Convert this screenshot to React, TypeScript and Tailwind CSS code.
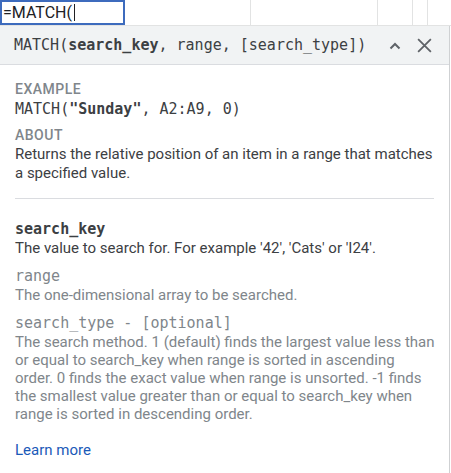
const MONO = "font-['DejaVu_Sans_Mono',monospace]";
const SANS = "font-['Roboto',sans-serif]";

function GridRow() {
  return (
    <div className="relative h-[26px] border-b border-[#e2e3e3]">
      <div className="absolute left-[250px] top-0 h-full w-px bg-[#e2e3e3]" />
      <div className="absolute left-[377px] top-0 h-full w-px bg-[#e2e3e3]" />
      <div className="absolute left-[412px] top-0 h-full w-px bg-[#e2e3e3]" />
      <div className="absolute left-[427px] top-0 h-full w-px bg-[#e2e3e3]" />
      <div
        className={`absolute left-0 top-0 flex h-[25px] w-[125px] items-center border-2 border-[#3d6bbd] bg-white pl-px text-[16px] text-[#202124] ${SANS}`}
      >
        <span>=MATCH(</span>
        <span className="ml-[2px] h-[17px] w-px bg-[#202124]" />
      </div>
    </div>
  );
}

function Header() {
  return (
    <div className="flex h-[39px] items-center justify-between border-b border-[#dadce0] bg-[#f1f3f4] pl-[14px] pr-[16px]">
      <span className={`text-[15px] text-[#3c4043] ${MONO}`}>
        MATCH(<b className="font-bold text-[#3c4043]">search_key</b>, range, [search_type])
      </span>
      <div className="flex items-center gap-[14px] text-[#5f6368]">
        <svg width="14" height="14" viewBox="0 0 14 14" className="mt-[1px]">
          <path d="M2.5 9.5 L7 5 L11.5 9.5" fill="none" stroke="currentColor" strokeWidth="2" />
        </svg>
        <svg width="17" height="17" viewBox="0 0 16 16">
          <path d="M2 2 L14 14 M14 2 L2 14" fill="none" stroke="currentColor" strokeWidth="1.7" />
        </svg>
      </div>
    </div>
  );
}

function Label({ children }: { children: React.ReactNode }) {
  return (
    <div className={`text-[14px] font-medium uppercase leading-[18px] tracking-[0.5px] text-[#80868b] ${SANS}`}>
      {children}
    </div>
  );
}

function Arg({
  name,
  children,
  active,
}: {
  name: string;
  children: React.ReactNode;
  active?: boolean;
}) {
  return (
    <div>
      <div
        className={`text-[15px] leading-[20px] ${MONO} ${
          active ? "font-bold text-[#3c4043]" : "text-[#80868b]"
        }`}
      >
        {name}
      </div>
      <p
        className={`text-[15px] leading-[18px] ${SANS} ${
          active ? "text-[#3c4043]" : "text-[#80868b]"
        }`}
      >
        {children}
      </p>
    </div>
  );
}

export default function App() {
  return (
    <div className="h-[473px] w-[451px] overflow-hidden bg-white">
      <GridRow />
      <div className="w-[450px] border-r border-[#cfd1d3] bg-white">
        <Header />
        <div className="pl-[15px] pr-[6px] pt-[15px]">
          <Label>Example</Label>
          <div className={`mt-px text-[15px] leading-[20px] text-[#3c4043] ${MONO}`}>
            MATCH(<b className="font-bold">"Sunday"</b>, A2:A9, 0)
          </div>
          <div className="mt-[7px]">
            <Label>About</Label>
          </div>
          <p className={`mt-px text-[15px] leading-[19px] text-[#3c4043] ${SANS}`}>
            Returns the relative position of an item in a range that matches a specified value.
          </p>
        </div>
        <div className="mx-[15px] mt-[15px] h-px bg-[#dadce0]" />
        <div className="flex flex-col gap-[9px] pl-[15px] pr-[4px] pt-[20px]">
          <Arg active name="search_key">
            The value to search for. For example '42', 'Cats' or 'I24'.
          </Arg>
          <Arg name="range">The one-dimensional array to be searched.</Arg>
          <Arg name="search_type - [optional]">
            The search method. 1 (default) finds the largest value less than
            <br />
            or equal to search_key when range is sorted in ascending
            <br />
            order. 0 finds the exact value when range is unsorted. -1 finds
            <br />
            the smallest value greater than or equal to search_key when
            <br />
            range is sorted in descending order.
          </Arg>
        </div>
        <div className={`px-[15px] pb-[20px] pt-[16px] text-[15px] text-[#1a5ab8] ${SANS}`}>
          Learn more
        </div>
      </div>
    </div>
  );
}
